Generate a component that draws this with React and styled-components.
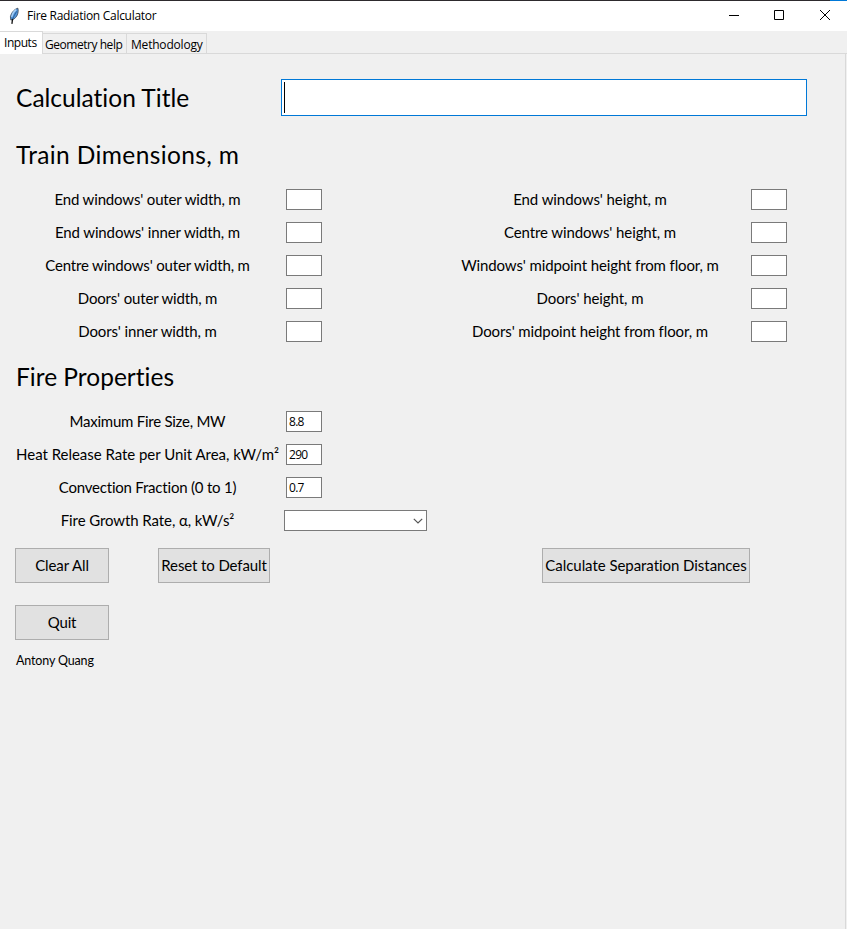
import React from 'react';
import styled, { createGlobalStyle } from 'styled-components';

const GlobalStyle = createGlobalStyle`
  * { box-sizing: border-box; }
  body { margin: 0; background: #f0f0f0; overflow: hidden; }
`;

const CALIBRI = '"Lato", "Noto Sans", sans-serif';
const SEGOE = '"Open Sans", "Noto Sans", sans-serif';

const Window = styled.div`
  width: 847px;
  height: 929px;
  display: flex;
  flex-direction: column;
  background: #f0f0f0;
  color: #000;
  font-family: ${CALIBRI};
  overflow: hidden;
`;

const TopEdge = styled.div`
  height: 1px;
  background: linear-gradient(to right, #2d2a2d 830px, #0078d7 830px);
`;

const TitleBar = styled.header`
  height: 30px;
  display: flex;
  align-items: center;
  padding-left: 8px;
  background: #fff;
`;

const Text = styled.span`
  white-space: pre;
  font-variant-ligatures: none;
  letter-spacing: ${(p) => p.$track || 0}px;
`;

const WindowTitle = styled(Text)`
  flex: 1;
  margin-left: 6px;
  font: 12px/16px ${SEGOE};
`;

const Caption = styled.button`
  width: ${(p) => p.$width || 45}px;
  height: 30px;
  display: flex;
  align-items: flex-start;
  padding: 9px 0 0 ${(p) => p.$inset || 20}px;
  border: 0;
  background: none;
`;

const TabStrip = styled.nav`
  height: 23px;
  display: flex;
  align-items: flex-end;
  border-bottom: 1px solid #d9d9d9;
`;

const Tab = styled.div`
  height: ${(p) => (p.$active ? 23 : 20)}px;
  width: ${(p) => p.$width}px;
  margin-bottom: ${(p) => (p.$active ? -1 : 0)}px;
  padding-left: ${(p) => p.$inset}px;
  border: solid #d9d9d9;
  border-width: 1px 1px 0 0;
  background: ${(p) => (p.$active ? '#fff' : '#f0f0f0')};
  font: 12px/22px ${SEGOE};
`;

const Pane = styled.main`
  flex: 1;
  margin-right: 1px;
  padding: 25px 0 0 15px;
  border-right: 1px solid #d9d9d9;
`;

const TitleRow = styled.div`
  display: flex;
  align-items: center;
  height: 37px;
`;

const Heading = styled.h2`
  margin: 0;
  padding-left: 1px;
  font: 24.5px/38px ${CALIBRI};
  width: ${(p) => p.$width || 'auto'};
`;

const TitleEntry = styled.div`
  width: 526px;
  height: 37px;
  padding: 2px;
  border: 1px solid #0078d7;
  background: #fff;
`;

const Caret = styled.div`
  width: 1px;
  height: 31px;
  background: #000;
`;

const Section = styled.section`
  margin-top: ${(p) => p.$top}px;
`;

const Columns = styled.div`
  display: flex;
  gap: 139px;
  margin: 9px 0 0 1px;
`;

const Field = styled.label`
  display: grid;
  grid-template-columns: ${(p) => p.$label}px auto;
  justify-content: start;
  column-gap: ${(p) => p.$gap}px;
  align-items: center;
  height: 33px;
  font-size: 15px;
  line-height: 20px;
`;

const FieldLabel = styled(Text)`
  justify-self: center;
  padding-bottom: 2px;
`;

const Entry = styled.div`
  width: 36px;
  height: 21px;
  padding-left: 2px;
  border: 1px solid #7a7a7a;
  background: #fff;
  font: 12px/19px ${SEGOE};
`;

const Combo = styled.div`
  width: 143px;
  height: 21px;
  display: flex;
  align-items: center;
  justify-content: flex-end;
  margin-left: -2px;
  padding-right: 3px;
  border: 1px solid #7a7a7a;
  background: #fff;
`;

const Buttons = styled.div`
  display: flex;
  margin-top: ${(p) => p.$top}px;
`;

const Button = styled.button`
  width: ${(p) => p.$width}px;
  height: 35px;
  margin: 0 ${(p) => p.$after || 0}px 0 0;
  padding: 0 0 1px;
  display: flex;
  align-items: center;
  justify-content: center;
  border: 1px solid #adadad;
  background: #e1e1e1;
  color: #000;
  font: 15px/20px ${CALIBRI};
`;

const Author = styled.footer`
  margin: 13px 0 0 1px;
  font: 12.5px/16px ${CALIBRI};
`;

const Feather = () => (
  <svg width="13" height="18" viewBox="0 0 13 18">
    <path d="M9.900 1.200C7 1.800 3.200 5.400 2.400 9.800L2.800 13l2.300-.6C8.800 10.600 11 6 9.900 1.200Z" fill="#4f94dc" stroke="#39434f" strokeWidth=".8" />
    <path d="M8.200 2.600C6 4.200 4.300 6.800 3.700 10" fill="none" stroke="#a9d0f5" strokeWidth="1.300" />
    <path d="M8.600 4.400C7 7 5.400 10 4.500 12.500" fill="none" stroke="#1d3f66" strokeWidth=".6" />
    <path d="M4.600 11.800L3.900 16.800" fill="none" stroke="#111" strokeWidth="1.300" />
  </svg>
);

const TRAIN_LEFT = [
  ["End windows' outer width, m", -0.16],
  ["End windows' inner width, m", -0.13],
  ["Centre windows' outer width, m", -0.17],
  ["Doors' outer width, m", -0.17],
  ["Doors' inner width, m", -0.13],
];
const TRAIN_RIGHT = [
  ["End windows' height, m", -0.08],
  ["Centre windows' height, m", -0.1],
  ["Windows' midpoint height from floor, m", -0.12],
  ["Doors' height, m", -0.07],
  ["Doors' midpoint height from floor, m", -0.11],
];
const FIRE = [
  ['Maximum Fire Size, MW', -0.25, '8.8'],
  ['Heat Release Rate per Unit Area, kW/m²', -0.03, '290'],
  ['Convection Fraction (0 to 1)', -0.21, '0.7'],
];

export default function App() {
  return (
    <Window>
      <GlobalStyle />
      <TopEdge />
      <TitleBar>
        <Feather />
        <WindowTitle $track={-0.29}>Fire Radiation Calculator</WindowTitle>
        <Caption aria-label="Minimize">
          <svg width="11" height="11"><path d="M0 5.500h10" stroke="#000" /></svg>
        </Caption>
        <Caption aria-label="Maximize">
          <svg width="11" height="11"><path d="M.5.500h9v9h-9z" fill="none" stroke="#000" /></svg>
        </Caption>
        <Caption aria-label="Close" $width={48} $inset={21}>
          <svg width="11" height="11"><path d="M0 0l10 10M10 0l-10 10" stroke="#000" /></svg>
        </Caption>
      </TitleBar>
      <TabStrip>
        <Tab $active $width={43} $inset={4}><Text $track={-0.46}>Inputs</Text></Tab>
        <Tab $width={84} $inset={2}><Text $track={-0.46}>Geometry help</Text></Tab>
        <Tab $width={80} $inset={4}><Text $track={-0.2}>Methodology</Text></Tab>
      </TabStrip>
      <Pane>
        <TitleRow>
          <Heading $width="266px"><Text $track={0.01}>Calculation Title</Text></Heading>
          <TitleEntry><Caret /></TitleEntry>
        </TitleRow>
        <Section $top={20}>
          <Heading><Text $track={0.38}>Train Dimensions, m</Text></Heading>
          <Columns>
            <div>
              {TRAIN_LEFT.map(([label, track]) => (
                <Field key={label} $label={263} $gap={7}>
                  <FieldLabel $track={track}>{label}</FieldLabel>
                  <Entry />
                </Field>
              ))}
            </div>
            <div>
              {TRAIN_RIGHT.map(([label, track]) => (
                <Field key={label} $label={258} $gap={32}>
                  <FieldLabel $track={track}>{label}</FieldLabel>
                  <Entry />
                </Field>
              ))}
            </div>
          </Columns>
        </Section>
        <Section $top={10}>
          <Heading><Text $track={0.01}>Fire Properties</Text></Heading>
          <Columns>
            <div>
              {FIRE.map(([label, track, value]) => (
                <Field key={label} $label={263} $gap={7}>
                  <FieldLabel $track={track}>{label}</FieldLabel>
                  <Entry><Text $track={-0.7}>{value}</Text></Entry>
                </Field>
              ))}
              <Field $label={263} $gap={7}>
                <FieldLabel $track={-0.09}>Fire Growth Rate, α, kW/s²</FieldLabel>
                <Combo>
                  <svg width="10" height="6"><path d="M.8.800L5 5l4.200-4.200" fill="none" stroke="#555" strokeWidth="1.200" /></svg>
                </Combo>
              </Field>
            </div>
          </Columns>
        </Section>
        <Buttons $top={11}>
          <Button $width={94} $after={49}><Text $track={-0.1}>Clear All</Text></Button>
          <Button $width={112} $after={272}><Text $track={-0.11}>Reset to Default</Text></Button>
          <Button $width={208}><Text $track={-0.05}>Calculate Separation Distances</Text></Button>
        </Buttons>
        <Buttons $top={22}>
          <Button $width={94}><Text $track={-0.2}>Quit</Text></Button>
        </Buttons>
        <Author><Text $track={-0.15}>Antony Quang</Text></Author>
      </Pane>
    </Window>
  );
}
